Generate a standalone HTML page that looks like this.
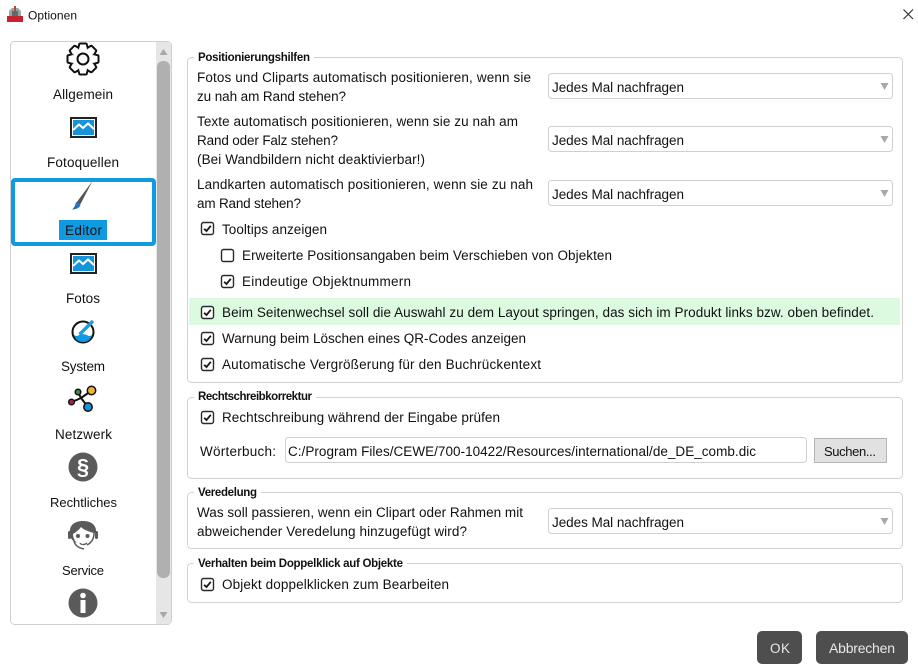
<!DOCTYPE html>
<html lang="de">
<head>
<meta charset="utf-8">
<title>Optionen</title>
<style>
html,body{margin:0;padding:0;background:#fff;width:918px;height:672px;overflow:hidden}
svg{display:block}
text{font-family:"Liberation Sans",sans-serif;font-size:13.5px;fill:#111}
.s{font-size:13px}
.b{font-weight:bold;font-size:11.5px;fill:#111}
.g{fill:none;stroke:#d2d2d2;stroke-width:1}
.c{fill:#fff;stroke:#d0d0d0;stroke-width:1}
.cb{fill:#fff;stroke:#2a2a2a;stroke-width:1.4}
.ck{fill:none;stroke:#1a1a1a;stroke-width:1.8}
.ar{fill:#a8a8a8}
</style>
</head>
<body>
<svg width="918" height="672" viewBox="0 0 918 672" xmlns="http://www.w3.org/2000/svg">
<defs>
<g id="cbx"><rect class="cb" x="0.500" y="0.500" width="12" height="12" rx="2"/><path class="ck" d="M3.200 6.800 5.500 9 9.800 3.800"/></g>
<g id="pic"><rect x="1" y="1" width="25" height="19" fill="#fff" stroke="#222" stroke-width="2"/><rect x="3" y="3" width="21" height="15" fill="#1594dc"/><path d="M3 13 9 7.500 13 11 18 6.500 24 12" fill="none" stroke="#fff" stroke-width="2"/></g>
<g id="tooth"><path d="M-4-10-2.800-14.500H2.800L4-10Z"/></g>
<g id="gearshape"><circle r="10.500"/><use href="#tooth"/><use href="#tooth" transform="rotate(45)"/><use href="#tooth" transform="rotate(90)"/><use href="#tooth" transform="rotate(135)"/><use href="#tooth" transform="rotate(180)"/><use href="#tooth" transform="rotate(225)"/><use href="#tooth" transform="rotate(270)"/><use href="#tooth" transform="rotate(315)"/></g>
</defs>

<!-- title bar -->
<rect x="7" y="16" width="16" height="6" fill="#c8232c"/>
<path d="M9 16V11L12 8H18L21 11V16Z" fill="#9aa5a5"/>
<rect x="14" y="6" width="2" height="5" fill="#b5483d"/>
<rect x="12" y="11" width="6" height="5" fill="#5d6c70"/>
<text x="28" y="19.500" style="font-size:12px" textLength="49">Optionen</text>
<path d="M903.500 9.500 913 19M913 9.500 903.500 19" stroke="#333" stroke-width="1.200" fill="none"/>

<!-- sidebar -->
<rect x="10.500" y="41.500" width="161" height="583" rx="4" fill="#fff" stroke="#cfcfcf"/>
<rect x="156" y="42" width="15" height="582" fill="#e6e6e6"/>
<rect x="157" y="61" width="13" height="517" rx="6" fill="#b0b0b0"/>
<path class="ar" d="M159.500 55 163.500 49 167.500 55Z"/>
<path class="ar" d="M159.500 612 163.500 618 167.500 612Z"/>

<!-- gear -->
<g transform="translate(83 59)">
<use href="#gearshape" fill="#111" stroke="#111" stroke-width="4" stroke-linejoin="round"/>
<use href="#gearshape" fill="#fff"/>
<circle r="5.500" fill="#fff" stroke="#111" stroke-width="2"/>
</g>
<text x="53" y="99" textLength="60">Allgemein</text>

<use href="#pic" x="70" y="117"/>
<text x="47" y="167" textLength="72">Fotoquellen</text>

<!-- selection -->
<rect x="13" y="180" width="141" height="64" rx="2" fill="#fff" stroke="#0f9ae2" stroke-width="4"/>
<path d="M92.500 181 80 205 76.500 202.500Z" fill="#555"/>
<path d="M76 202 80.500 205.500Q78 209.500 72 209.500 75 207 76 202Z" fill="#1f72c4"/>
<rect x="59" y="220" width="48" height="20" fill="#0f9ae2"/>
<text x="65" y="235" textLength="37">Editor</text>

<use href="#pic" x="70" y="253"/>
<text x="66" y="303" textLength="34">Fotos</text>

<!-- system -->
<circle cx="83" cy="332" r="10.500" fill="#fff" stroke="#111" stroke-width="2"/>
<path d="M74 335Q77 337 79 335L83 334 87 335Q89 337 92 335 90 342 83 342 76 342 74 335Z" fill="#0f9ae2"/>
<path d="M79.500 334.500 93 321" stroke="#15a0e0" stroke-width="3.400"/>
<text x="61" y="371" textLength="44">System</text>

<!-- network -->
<g stroke="#111" stroke-width="1.500">
<path d="M72 402 81 398 88 407M81 398 91 391M81 398 78 392" fill="none" stroke-width="2"/>
<circle cx="91.500" cy="390.500" r="4.200" fill="#f0b232"/>
<circle cx="78" cy="392" r="2.800" fill="#3f8a3f"/>
<circle cx="71.500" cy="402" r="2.800" fill="#b0205e"/>
<circle cx="88" cy="407" r="4.200" fill="#1594dc"/>
</g>
<text x="55" y="439" textLength="57">Netzwerk</text>

<!-- paragraph -->
<circle cx="83" cy="467" r="14.500" fill="#5a5a5a"/>
<text x="83" y="474.500" text-anchor="middle" style="font-size:22px;font-weight:bold;fill:#fff">§</text>
<text class="s" x="50" y="507" textLength="67">Rechtliches</text>

<!-- service -->
<path d="M70 533C69 525 75 521 83 521 91 521 97 525 96 533L94 533C90 532 84 530 81 527 79 530 76 532 73 534 73 538 75 541 77 543 72 541 70 538 70 533Z" fill="#5a5a5a"/>
<path d="M94 533C94 539 91 543 87 545M74 541C75 546 79 548 84 549" fill="none" stroke="#5a5a5a" stroke-width="1.500"/>
<circle cx="78" cy="536" r="2" fill="#5a5a5a"/><circle cx="87.500" cy="536" r="2" fill="#5a5a5a"/>
<path d="M80 543C81 545 85 545 87 543" fill="none" stroke="#5a5a5a" stroke-width="1.300"/>
<rect x="68" y="531" width="3" height="8" rx="1.500" fill="#5a5a5a"/><rect x="95" y="531" width="3" height="8" rx="1.500" fill="#5a5a5a"/>
<text class="s" x="62" y="575" textLength="42">Service</text>

<!-- info -->
<circle cx="83" cy="603" r="14.500" fill="#5a5a5a"/>
<circle cx="83" cy="595.500" r="2.800" fill="#fff"/>
<rect x="80.500" y="600" width="5" height="13" fill="#fff"/>

<!-- group 1 -->
<rect class="g" x="187.500" y="57.500" width="715" height="325" rx="4"/>
<rect x="194" y="52" width="120" height="10" fill="#fff"/>
<text class="b" x="198" y="61" textLength="112">Positionierungshilfen</text>
<text x="197" y="82" textLength="334">Fotos und Cliparts automatisch positionieren, wenn sie</text>
<text x="197" y="101" textLength="149">zu nah am Rand stehen?</text>
<text x="197" y="126" textLength="321">Texte automatisch positionieren, wenn sie zu nah am</text>
<text x="197" y="145" textLength="141">Rand oder Falz stehen?</text>
<text x="197" y="164" textLength="228">(Bei Wandbildern nicht deaktivierbar!)</text>
<text x="197" y="189" textLength="336">Landkarten automatisch positionieren, wenn sie zu nah</text>
<text x="197" y="208" textLength="104">am Rand stehen?</text>

<rect class="c" x="548.500" y="73.500" width="344" height="25" rx="3"/>
<text x="552" y="92" textLength="132">Jedes Mal nachfragen</text>
<path class="ar" d="M880.500 83 888.500 83 884.500 90Z"/>
<rect class="c" x="548.500" y="126.500" width="344" height="25" rx="3"/>
<text x="552" y="145" textLength="132">Jedes Mal nachfragen</text>
<path class="ar" d="M880.500 136 888.500 136 884.500 143Z"/>
<rect class="c" x="548.500" y="180.500" width="344" height="25" rx="3"/>
<text x="552" y="199" textLength="132">Jedes Mal nachfragen</text>
<path class="ar" d="M880.500 190 888.500 190 884.500 197Z"/>

<use href="#cbx" x="201" y="222"/>
<text x="222" y="234" textLength="105">Tooltips anzeigen</text>
<rect class="cb" x="221.500" y="249.500" width="12" height="12" rx="2"/>
<text x="242" y="260" textLength="370">Erweiterte Positionsangaben beim Verschieben von Objekten</text>
<use href="#cbx" x="221" y="275"/>
<text x="242" y="286" textLength="169">Eindeutige Objektnummern</text>

<rect x="189" y="298" width="711" height="27" fill="#dcfadf"/>
<use href="#cbx" x="201" y="306"/>
<text x="222" y="317" textLength="652">Beim Seitenwechsel soll die Auswahl zu dem Layout springen, das sich im Produkt links bzw. oben befindet.</text>
<use href="#cbx" x="201" y="332"/>
<text x="222" y="343" textLength="304">Warnung beim Löschen eines QR-Codes anzeigen</text>
<use href="#cbx" x="201" y="358"/>
<text x="222" y="369" textLength="319">Automatische Vergrößerung für den Buchrückentext</text>

<!-- group 2 -->
<rect class="g" x="187.500" y="397.500" width="715" height="81" rx="4"/>
<rect x="194" y="391" width="122" height="10" fill="#fff"/>
<text class="b" x="198" y="400" textLength="114">Rechtschreibkorrektur</text>
<use href="#cbx" x="201" y="411"/>
<text x="222" y="422" textLength="278">Rechtschreibung während der Eingabe prüfen</text>
<text x="200" y="456" textLength="76">Wörterbuch:</text>
<rect class="c" x="285.500" y="437.500" width="521" height="25" rx="3"/>
<text x="288" y="456" textLength="468">C:/Program Files/CEWE/700-10422/Resources/international/de_DE_comb.dic</text>
<rect x="814.500" y="438.500" width="72" height="24" fill="#e1e1e1" stroke="#b4b4b4"/>
<text class="s" x="824" y="456" textLength="52">Suchen...</text>

<!-- group 3 -->
<rect class="g" x="187.500" y="492.500" width="715" height="56" rx="4"/>
<rect x="194" y="487" width="67" height="10" fill="#fff"/>
<text class="b" x="198" y="496" textLength="59">Veredelung</text>
<text x="197" y="517" textLength="326">Was soll passieren, wenn ein Clipart oder Rahmen mit</text>
<text x="197" y="536" textLength="270">abweichender Veredelung hinzugefügt wird?</text>
<rect class="c" x="548.500" y="508.500" width="344" height="25" rx="3"/>
<text x="552" y="527" textLength="132">Jedes Mal nachfragen</text>
<path class="ar" d="M880.500 518 888.500 518 884.500 525Z"/>

<!-- group 4 -->
<rect class="g" x="187.500" y="563.500" width="715" height="39" rx="4"/>
<rect x="194" y="558" width="213" height="10" fill="#fff"/>
<text class="b" x="198" y="567" textLength="205">Verhalten beim Doppelklick auf Objekte</text>
<use href="#cbx" x="201" y="578"/>
<text x="222" y="589" textLength="227">Objekt doppelklicken zum Bearbeiten</text>

<!-- buttons -->
<rect x="757" y="631" width="45" height="33" rx="5" fill="#4e4e4e"/>
<text x="770" y="653" textLength="20" style="fill:#e8e8e8">OK</text>
<rect x="816" y="631" width="92" height="33" rx="5" fill="#4e4e4e"/>
<text x="829" y="653" textLength="66" style="fill:#e8e8e8;font-size:14px">Abbrechen</text>
</svg>
</body>
</html>
